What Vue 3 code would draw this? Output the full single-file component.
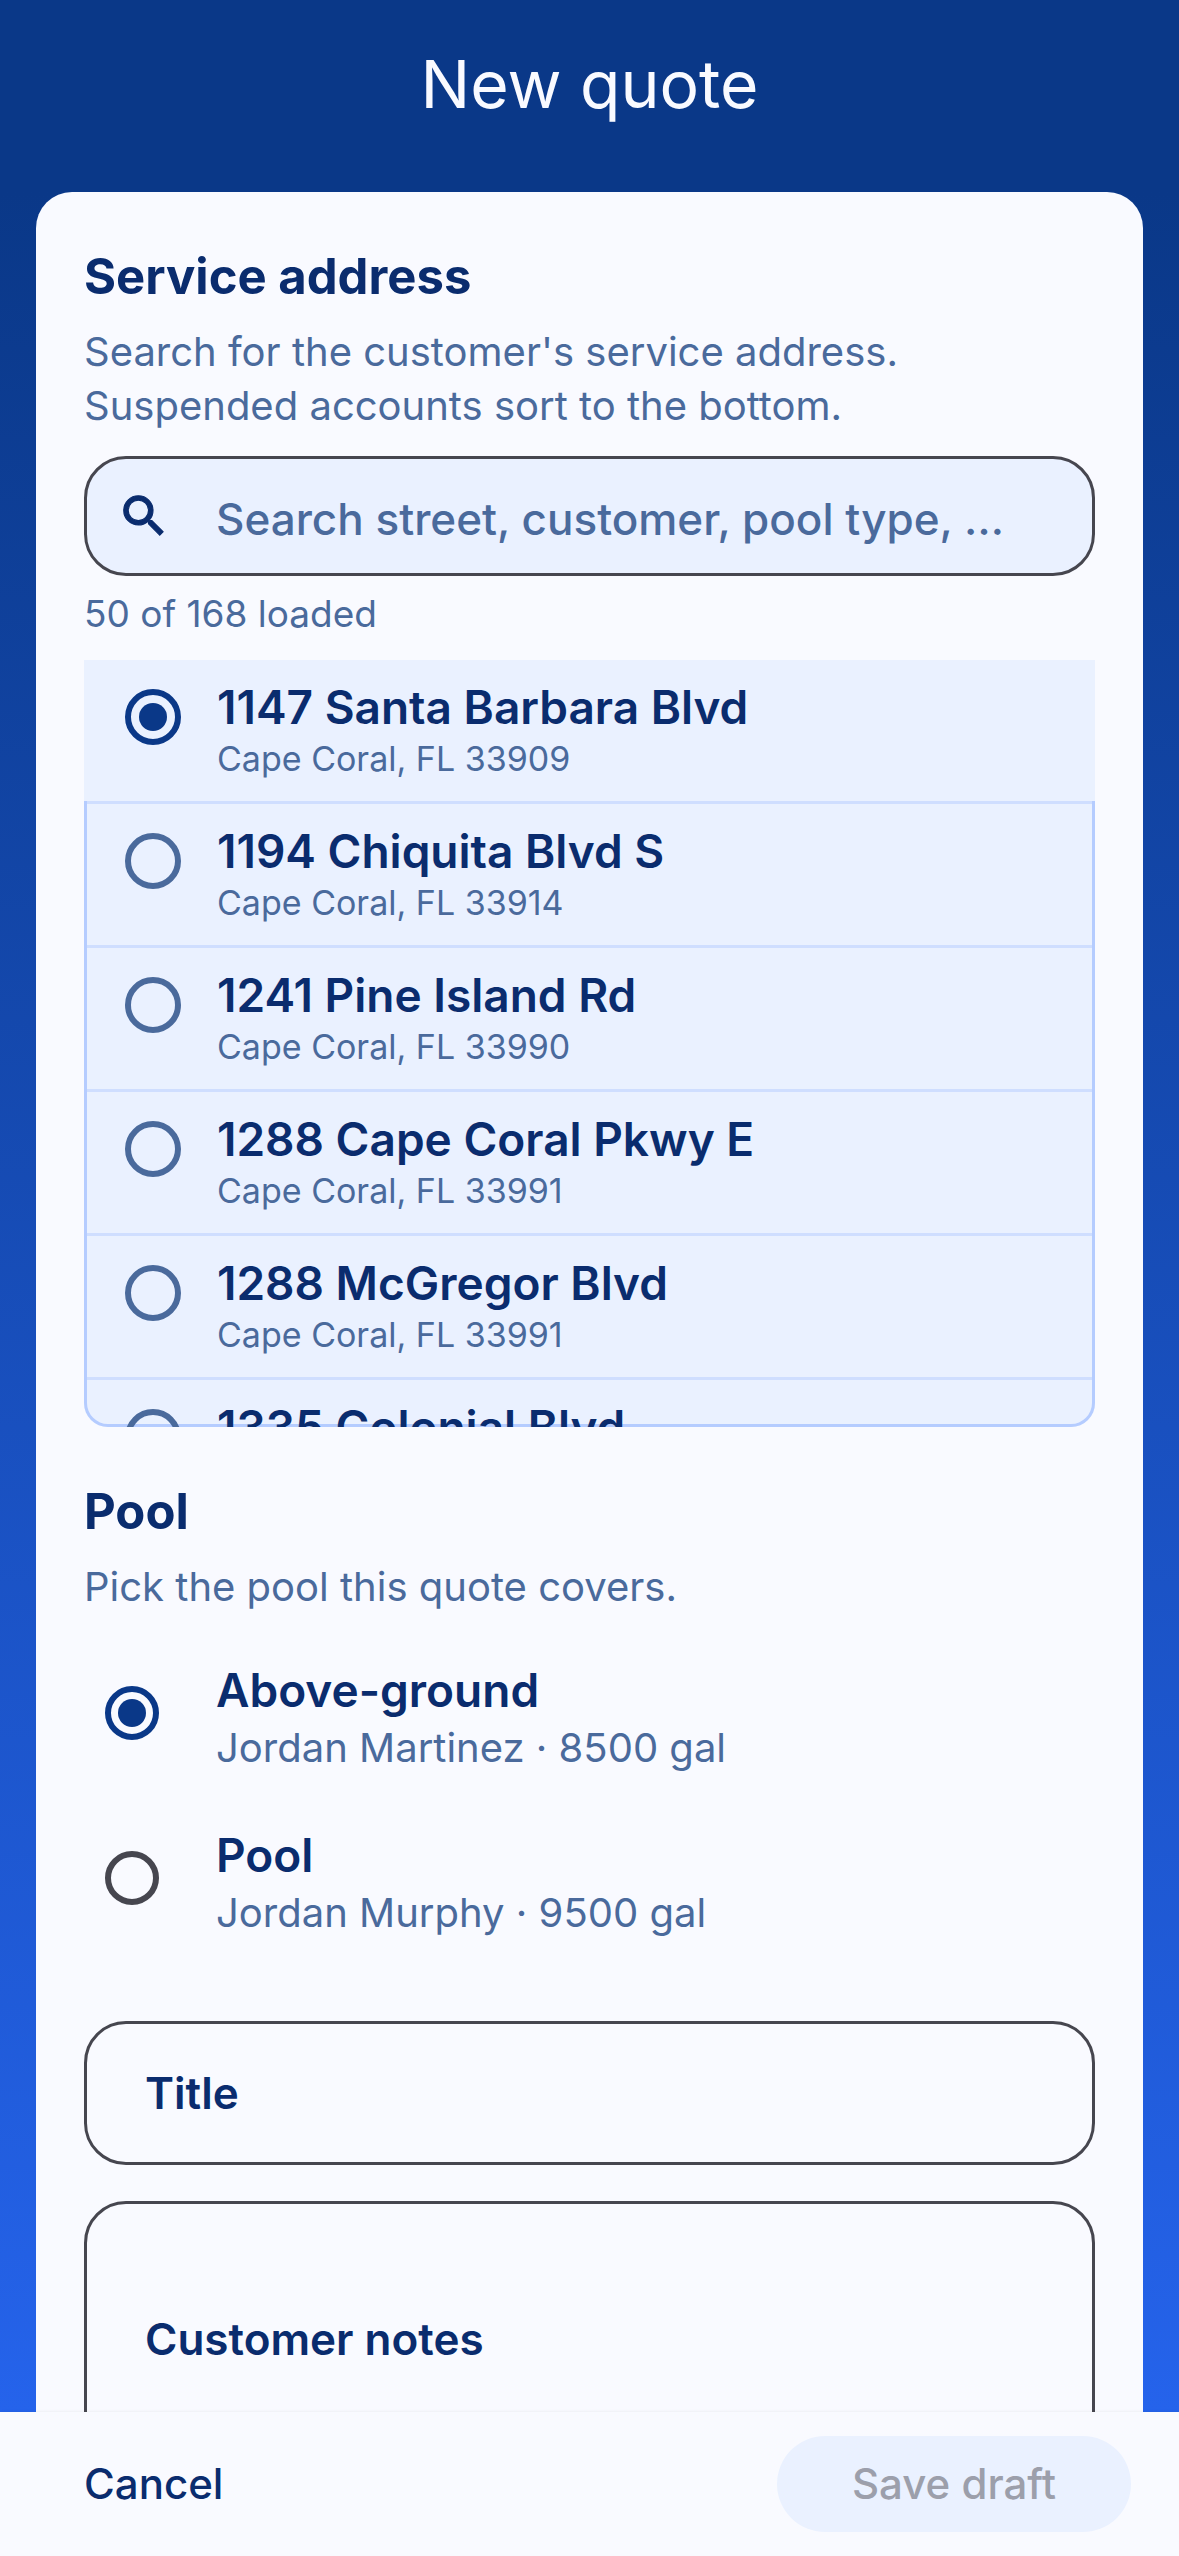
<script setup>
import { ref } from 'vue'

const addresses = [
  { id: 1, street: '1147 Santa Barbara Blvd', city: 'Cape Coral, FL 33909' },
  { id: 2, street: '1194 Chiquita Blvd S', city: 'Cape Coral, FL 33914' },
  { id: 3, street: '1241 Pine Island Rd', city: 'Cape Coral, FL 33990' },
  { id: 4, street: '1288 Cape Coral Pkwy E', city: 'Cape Coral, FL 33991' },
  { id: 5, street: '1288 McGregor Blvd', city: 'Cape Coral, FL 33991' },
  { id: 6, street: '1335 Colonial Blvd', city: '' }
]

const pools = [
  { id: 1, name: 'Above-ground', detail: 'Jordan Martinez · 8500 gal' },
  { id: 2, name: 'Pool', detail: 'Jordan Murphy · 9500 gal' }
]

const search = ref('')
const addressId = ref(1)
const poolId = ref(1)
const title = ref('')
const notes = ref('')
</script>

<template>
  <div class="quote-page">
    <header class="quote-page__header">
      <h1>New quote</h1>
    </header>

    <main class="quote-page__body">
      <form id="quote-form" class="quote-card" @submit.prevent>
        <section>
          <h2 id="address-heading">Service address</h2>
          <p class="quote-card__hint">
            Search for the customer's service address. Suspended accounts sort to the bottom.
          </p>
          <label class="search-field">
            <svg class="search-field__icon" viewBox="0 0 24 24" aria-hidden="true">
              <path
                d="M15.5 14h-.79l-.28-.27A6.47 6.47 0 0 0 16 9.5 6.5 6.5 0 1 0 9.5 16c1.61 0 3.09-.59 4.23-1.57l.27.28v.79l5 4.99L20.49 19l-4.99-5zm-6 0C7.01 14 5 11.99 5 9.5S7.01 5 9.5 5 14 7.01 14 9.5 11.99 14 9.5 14z"
              />
            </svg>
            <input
              v-model="search"
              type="text"
              aria-label="Search street, customer, pool type"
              placeholder="Search street, customer, pool type, …"
            />
          </label>
          <p class="quote-card__count">50 of 168 loaded</p>

          <ul class="address-list" role="radiogroup" aria-labelledby="address-heading">
            <li v-for="address in addresses" :key="address.id" class="address-list__item">
              <label
                class="address-list__row"
                :class="{ 'address-list__row--selected': address.id === addressId }"
              >
                <input v-model="addressId" class="radio" type="radio" name="address" :value="address.id" />
                <span class="address-list__copy">
                  <strong>{{ address.street }}</strong>
                  <small v-if="address.city">{{ address.city }}</small>
                </span>
              </label>
            </li>
          </ul>
        </section>

        <section class="quote-card__pool">
          <h2 id="pool-heading">Pool</h2>
          <p class="quote-card__hint">Pick the pool this quote covers.</p>
          <div class="pool-list" role="radiogroup" aria-labelledby="pool-heading">
            <label v-for="pool in pools" :key="pool.id" class="pool-list__row">
              <input v-model="poolId" class="radio radio--pool" type="radio" name="pool" :value="pool.id" />
              <span class="pool-list__copy">
                <strong>{{ pool.name }}</strong>
                <span>{{ pool.detail }}</span>
              </span>
            </label>
          </div>
        </section>

        <div class="quote-card__fields">
          <input v-model="title" class="text-field" type="text" aria-label="Title" placeholder="Title" />
          <textarea
            v-model="notes"
            class="text-field text-field--notes"
            aria-label="Customer notes"
            placeholder="Customer notes"
          ></textarea>
        </div>
      </form>
    </main>

    <footer class="quote-page__footer">
      <button class="text-action" type="button">Cancel</button>
      <button class="primary-action" type="submit" form="quote-form" disabled>Save draft</button>
    </footer>
  </div>
</template>

<style>
body {
  margin: 0;
}
</style>

<style scoped>
.quote-page {
  display: flex;
  flex-direction: column;
  height: 100vh;
  overflow: hidden;
  background: #0a3888;
  color: #0a2c6e;
  font-family: Inter, "Liberation Sans", sans-serif;
}

.quote-page *,
.quote-page *::before {
  box-sizing: border-box;
}

.quote-page__header {
  display: flex;
  flex: none;
  align-items: center;
  justify-content: center;
  height: 192px;
  padding-bottom: 24px;
}

.quote-page__header h1 {
  margin: 0;
  color: #f9faff;
  font-size: 66px;
  font-weight: 400;
  line-height: 84px;
}

.quote-page__body {
  flex: 1;
  min-height: 0;
  padding: 0 36px;
  overflow-y: auto;
  scrollbar-width: none;
  background: linear-gradient(#0a3888, #2563eb);
}

.quote-card {
  padding: 55px 48px 48px;
  border-radius: 36px;
  background: #f9faff;
}

.quote-card h2 {
  margin: 0;
  font-size: 49px;
  font-weight: 700;
  line-height: 60px;
}

.quote-card__hint {
  max-width: 900px;
  margin: 18px 0 0;
  color: #4a6a9c;
  font-size: 40px;
  line-height: 54px;
}

.search-field {
  display: flex;
  align-items: center;
  height: 120px;
  margin-top: 23px;
  padding: 0 42px 0 30px;
  border: 3px solid #46464f;
  border-radius: 42px;
  background: #eaf1ff;
}

.search-field__icon {
  flex: none;
  width: 54px;
  height: 54px;
  fill: #0a2c6e;
  stroke: #0a2c6e;
  stroke-width: 0.5;
}

.search-field input {
  flex: 1;
  min-width: 0;
  height: 100%;
  margin-left: 45px;
  padding: 6px 0 0;
  border: 0;
  outline: 0;
  background: transparent;
  color: #0a2c6e;
  font: 500 44px/54px Inter, "Liberation Sans", sans-serif;
}

.search-field input::placeholder {
  color: #4a6a9c;
  opacity: 1;
}

.quote-card__count {
  margin: 14px 0 22px;
  color: #4a6a9c;
  font-size: 37px;
  line-height: 48px;
}

.radio {
  display: grid;
  flex: none;
  place-items: center;
  width: 56px;
  height: 56px;
  margin: 12px 0 0;
  border: 6px solid #4a6a9c;
  border-radius: 50%;
  appearance: none;
}

.radio--pool {
  width: 54px;
  height: 54px;
  margin-top: 26px;
  border-color: #46464f;
}

.radio:checked {
  border-color: #0a3888;
}

.radio:checked::before {
  width: 28px;
  height: 28px;
  border-radius: 50%;
  background: #0a3888;
  content: "";
}

/* The outline is an inset shadow so rows can paint over it while scrolling. */
.address-list {
  max-height: 767px;
  margin: 0;
  padding: 0;
  overflow-y: auto;
  scrollbar-width: none;
  border-radius: 0 0 24px 24px;
  background: #eaf1ff;
  box-shadow: inset 0 0 0 3px #b5ccff;
  list-style: none;
}

.address-list__item::after {
  display: block;
  height: 3px;
  margin: 0 3px;
  background: #cfdeff;
  content: "";
}

.address-list__row {
  display: flex;
  gap: 36px;
  min-height: 141px;
  padding: 17px 41px 18px;
}

.address-list__row--selected {
  background: #eaf1ff;
}

.address-list__copy,
.pool-list__copy {
  display: flex;
  flex-direction: column;
  gap: 1px;
}

.address-list__copy strong,
.pool-list__copy strong {
  font-size: 46px;
  font-weight: 600;
  line-height: 60px;
}

.address-list__copy small {
  color: #4a6a9c;
  font-size: 34px;
  line-height: 42px;
}

.quote-card__pool {
  margin-top: 55px;
}

.pool-list {
  margin-top: 21px;
}

.pool-list__row {
  display: flex;
  gap: 57px;
  padding: 25px 21px;
}

.pool-list__copy span {
  color: #4a6a9c;
  font-size: 40px;
  line-height: 54px;
}

.quote-card__fields {
  display: flex;
  flex-direction: column;
  gap: 36px;
  margin-top: 56px;
}

.text-field {
  width: 100%;
  height: 144px;
  padding: 0 58px;
  border: 3px solid #46464f;
  border-radius: 42px;
  outline: 0;
  background: transparent;
  color: #0a2c6e;
  font: 600 44px/54px Inter, "Liberation Sans", sans-serif;
}

.text-field::placeholder {
  color: #0a2c6e;
  opacity: 1;
}

.text-field--notes {
  height: 276px;
  padding: 108px 58px 36px;
  resize: none;
}

.quote-page__footer {
  display: flex;
  z-index: 1;
  flex: none;
  align-items: center;
  justify-content: space-between;
  padding: 24px 48px 24px 84px;
  background: #f9faff;
  box-shadow: 0 0 3px rgba(0, 0, 0, 0.08);
}

.text-action,
.primary-action {
  height: 96px;
  border: 0;
  font: 500 42px/54px Inter, "Liberation Sans", sans-serif;
}

.text-action {
  padding: 0;
  background: transparent;
  color: #0a2c6e;
}

.primary-action {
  min-width: 354px;
  padding: 0 72px;
  border-radius: 48px;
  background: #eaf1ff;
  color: #9c9fab;
}
</style>
